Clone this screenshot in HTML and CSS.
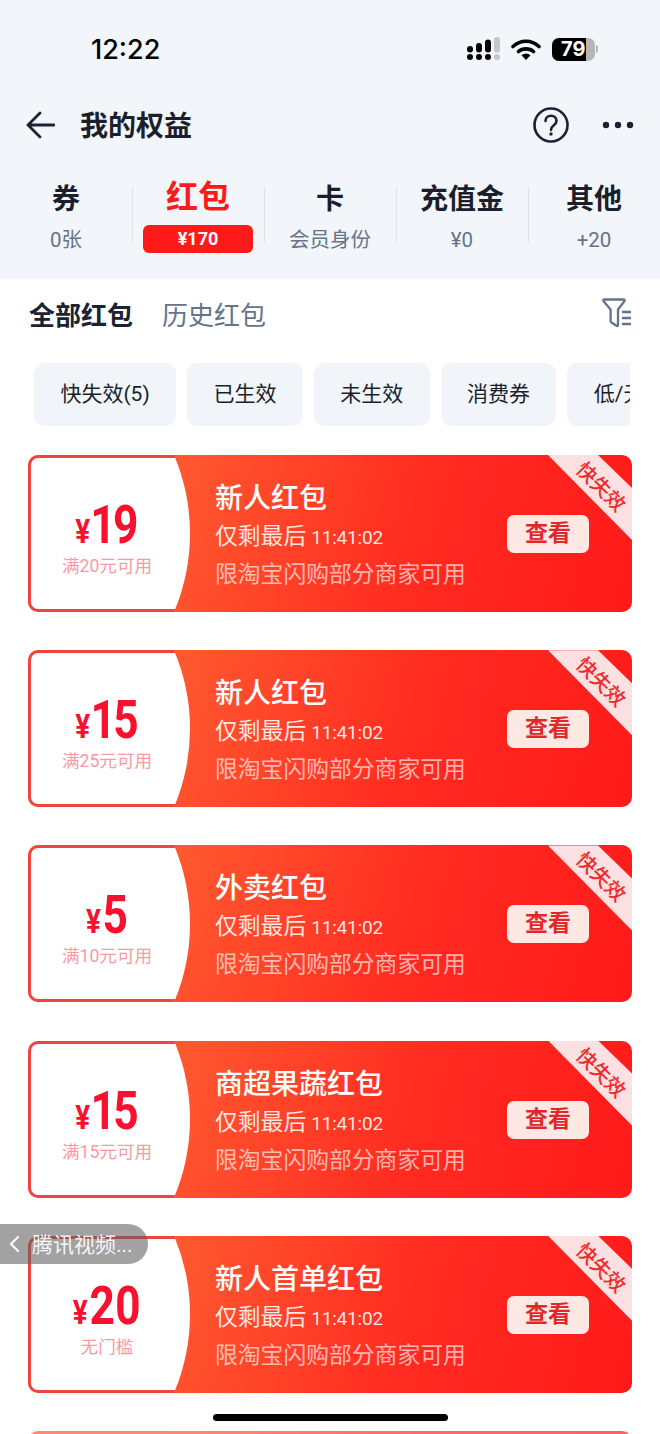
FILE: index.html
```html
<!DOCTYPE html>
<html lang="zh">

<head>
    <meta charset="UTF-8">
    <meta name="viewport" content="width=device-width, initial-scale=1.0">
    <title>我的权益</title>
    <link rel="stylesheet" href="styles.css">
</head>

<body>
    <div class="hd">
        <div class="st">
            <span class="tm">12:22</span>
            <div class="st-ic">
                <svg width="34" height="24" viewBox="0 0 34 24">
                    <g fill="#000">
                        <circle cx="3" cy="20" r="3"/><circle cx="12" cy="20" r="3"/><circle cx="21" cy="20" r="3"/>
                        <rect x="0" y="9" width="6" height="6.5" rx="3"/>
                        <rect x="9" y="6" width="6" height="9.5" rx="3"/>
                        <rect x="18" y="2.5" width="6" height="13" rx="3"/>
                    </g>
                    <g fill="#c4c7ca">
                        <circle cx="30" cy="20" r="3"/>
                        <rect x="27" y="0" width="6" height="15.5" rx="2.5"/>
                    </g>
                </svg>
                <svg class="wf" width="30" height="23" viewBox="0 0 30 23">
                    <path d="M2 8.500C9.500 1.500 20.500 1.500 28 8.500" fill="none" stroke="#000" stroke-width="3.600" stroke-linecap="round"/>
                    <path d="M7.500 13.500C11.500 10 18.500 10 22.500 13.500" fill="none" stroke="#000" stroke-width="3.600" stroke-linecap="round"/>
                    <path d="M10.500 17.200Q15 13.800 19.500 17.200L15 22Z" fill="#000"/>
                </svg>
                <div class="bt">
                    <div class="bt-b"><span class="bt-f"></span><span class="bt-t">79</span></div>
                    <span class="bt-n"></span>
                </div>
            </div>
        </div>
        <div class="nv">
            <svg class="bk" width="30" height="30" viewBox="0 0 30 30">
                <path d="M15 3 3 15l12 12M3 15h26" fill="none" stroke="#1a2233" stroke-width="2.800" stroke-linecap="round" stroke-linejoin="round"/>
            </svg>
            <span class="nv-t">我的权益</span>
            <svg class="hp" width="38" height="38" viewBox="0 0 38 38">
                <circle cx="19" cy="19" r="16.500" fill="none" stroke="#1a2233" stroke-width="2.600"/>
                <path d="M13.500 15c0-7 11-7 11 0 0 4.500-5.500 4-5.500 9" fill="none" stroke="#1a2233" stroke-width="2.600" stroke-linecap="round"/>
                <circle cx="19" cy="28" r="1.700" fill="#1a2233"/>
            </svg>
            <svg class="mr" width="32" height="8" viewBox="0 0 32 8">
                <circle cx="4" cy="4" r="3.200" fill="#1a2233"/><circle cx="16" cy="4" r="3.200" fill="#1a2233"/><circle cx="28" cy="4" r="3.200" fill="#1a2233"/>
            </svg>
        </div>
        <div class="tb">
            <div class="ti"><div class="ti-n">券</div><div class="ti-s">0张</div></div>
            <div class="ti on"><div class="ti-n">红包</div><div class="ti-s">¥170</div></div>
            <div class="ti"><div class="ti-n">卡</div><div class="ti-s">会员身份</div></div>
            <div class="ti"><div class="ti-n">充值金</div><div class="ti-s">¥0</div></div>
            <div class="ti"><div class="ti-n">其他</div><div class="ti-s">+20</div></div>
        </div>
    </div>

    <div class="sc">
        <span class="sc-a">全部红包</span>
        <span class="sc-b">历史红包</span>
        <svg class="fl" width="30" height="30" viewBox="0 0 30 30">
            <path d="M2.500 1.500h19c1.200 0 1.500 1 .9 1.700L16 11.500V27c0 1-.8 1.200-1.500.8l-5-3.300c-.6-.4-.9-.8-.9-1.500V11.500L1.600 3.200C1 2.500 1.300 1.500 2.500 1.500Z" fill="none" stroke="#64748b" stroke-width="2.300" stroke-linejoin="round"/>
            <path d="M20 14h9M20 20h9M20 26h9" stroke="#64748b" stroke-width="2.300"/>
        </svg>
    </div>

    <div class="cp">
        <div class="ch">快失效(5)</div>
        <div class="ch">已生效</div>
        <div class="ch">未生效</div>
        <div class="ch">消费券</div>
        <div class="ch">低/无门槛</div>
    </div>

    <div class="ls">
        <div class="cd">
            <div class="cd-l">
                <div class="pr"><span class="pr-y">¥</span>19</div>
                <div class="cd-c">满20元可用</div>
            </div>
            <div class="cd-m">
                <div class="cd-t">新人红包</div>
                <div class="cd-d">仅剩最后<span class="cd-tm">11:41:02</span></div>
                <div class="cd-r">限淘宝闪购部分商家可用</div>
            </div>
            <div class="cd-b">查看</div>
            <div class="rb"></div>
            <div class="rb-t">快失效</div>
        </div>
        <div class="cd">
            <div class="cd-l">
                <div class="pr"><span class="pr-y">¥</span>15</div>
                <div class="cd-c">满25元可用</div>
            </div>
            <div class="cd-m">
                <div class="cd-t">新人红包</div>
                <div class="cd-d">仅剩最后<span class="cd-tm">11:41:02</span></div>
                <div class="cd-r">限淘宝闪购部分商家可用</div>
            </div>
            <div class="cd-b">查看</div>
            <div class="rb"></div>
            <div class="rb-t">快失效</div>
        </div>
        <div class="cd">
            <div class="cd-l">
                <div class="pr"><span class="pr-y">¥</span>5</div>
                <div class="cd-c">满10元可用</div>
            </div>
            <div class="cd-m">
                <div class="cd-t">外卖红包</div>
                <div class="cd-d">仅剩最后<span class="cd-tm">11:41:02</span></div>
                <div class="cd-r">限淘宝闪购部分商家可用</div>
            </div>
            <div class="cd-b">查看</div>
            <div class="rb"></div>
            <div class="rb-t">快失效</div>
        </div>
        <div class="cd">
            <div class="cd-l">
                <div class="pr"><span class="pr-y">¥</span>15</div>
                <div class="cd-c">满15元可用</div>
            </div>
            <div class="cd-m">
                <div class="cd-t">商超果蔬红包</div>
                <div class="cd-d">仅剩最后<span class="cd-tm">11:41:02</span></div>
                <div class="cd-r">限淘宝闪购部分商家可用</div>
            </div>
            <div class="cd-b">查看</div>
            <div class="rb"></div>
            <div class="rb-t">快失效</div>
        </div>
        <div class="cd">
            <div class="cd-l">
                <div class="pr"><span class="pr-y">¥</span>20</div>
                <div class="cd-c">无门槛</div>
            </div>
            <div class="cd-m">
                <div class="cd-t">新人首单红包</div>
                <div class="cd-d">仅剩最后<span class="cd-tm">11:41:02</span></div>
                <div class="cd-r">限淘宝闪购部分商家可用</div>
            </div>
            <div class="cd-b">查看</div>
            <div class="rb"></div>
            <div class="rb-t">快失效</div>
        </div>
        <div class="cd dim"></div>
    </div>

    <div class="bk-app">
        <svg width="12" height="18" viewBox="0 0 12 18">
            <path d="M10 2 3 9l7 7" fill="none" stroke="#fff" stroke-width="2" stroke-linecap="round" stroke-linejoin="round"/>
        </svg>
        <span>腾讯视频...</span>
    </div>
    <div class="hm"></div>
</body>

</html>
```

FILE: styles.css
```css
* {
    box-sizing: border-box;
}

html,
body {
    margin: 0;
    padding: 0;
}

body {
    position: relative;
    width: 660px;
    height: 1434px;
    overflow: hidden;
    background: #fff;
    color: #1a2233;
    font-family: Roboto, "Noto Sans CJK SC", sans-serif;
}

.hd {
    height: 279px;
    background: #f2f6fa;
}

.st {
    display: flex;
    align-items: center;
    height: 96px;
    padding-top: 2px;
    padding-left: 91px;
}

.tm {
    font-family: Inter, sans-serif;
    font-size: 27px;
    font-weight: 500;
    color: #000;
}

.st-ic {
    display: flex;
    align-items: center;
    margin-left: auto;
    margin-right: 62px;
}

.wf {
    margin-left: 10px;
}

.bt {
    display: flex;
    align-items: center;
    margin-left: 11px;
}

.bt-b {
    position: relative;
    width: 43px;
    height: 23px;
    border-radius: 7px;
    background: #b5b5b5;
    overflow: hidden;
}

.bt-f {
    display: block;
    width: 34px;
    height: 23px;
    background: #000;
}

.bt-t {
    position: absolute;
    top: 0;
    left: 9px;
    line-height: 23px;
    font-family: Inter, sans-serif;
    font-size: 20px;
    font-weight: 700;
    color: #fff;
}

.bt-n {
    width: 2px;
    height: 8px;
    margin-left: 1px;
    border-radius: 0 2px 2px 0;
    background: #b5b5b5;
}

.nv {
    display: flex;
    align-items: center;
    height: 56px;
    padding-left: 25px;
}

.nv svg {
    margin-top: 2px;
}

.nv-t {
    margin-left: 25px;
    font-size: 28px;
    font-weight: 700;
    color: #1a1f2b;
}

.hp {
    margin-left: auto;
    margin-right: -1px;
}

.mr {
    margin-left: 33px;
    margin-right: 26px;
}

.tb {
    display: flex;
    padding-top: 28px;
}

.ti {
    position: relative;
    flex: 1;
    text-align: center;
}

.ti + .ti::before {
    content: "";
    position: absolute;
    top: 7px;
    bottom: 12px;
    left: 0;
    width: 1px;
    background: #dfe3e9;
}

.ti-n {
    height: 40px;
    line-height: 40px;
    font-size: 28px;
    font-weight: 700;
    color: #1a1f2b;
}

.ti-s {
    display: block;
    height: 28px;
    margin-top: 6px;
    line-height: 28px;
    font-size: 20.500px;
    color: #667389;
}

.on .ti-n {
    margin-top: -3px;
    font-size: 32px;
    color: #ff1a1a;
}

.on .ti-s {
    width: 110px;
    margin-top: 8px;
    margin-left: 11px;
    border-radius: 6px;
    background: #ff1a1a;
    font-size: 18px;
    font-weight: 700;
    color: #fff;
}

.sc {
    display: flex;
    align-items: center;
    height: 40px;
    margin-top: 14px;
    padding-left: 29px;
}

.sc-a {
    font-size: 26px;
    font-weight: 700;
    color: #1a2233;
}

.sc-b {
    margin-left: 29px;
    font-size: 26px;
    color: #64748b;
}

.fl {
    margin-left: auto;
    margin-right: 28px;
}

.cp {
    display: flex;
    gap: 11px;
    width: 596px;
    height: 63px;
    margin: 30px 0 29px 34px;
    overflow: hidden;
}

.ch {
    flex: none;
    padding: 0 26.400px;
    border-radius: 10px;
    background: #f1f5f9;
    line-height: 63px;
    font-size: 21px;
    color: #1a1f2b;
    white-space: nowrap;
}

.ls {
    display: flex;
    flex-direction: column;
    gap: 38.200px;
    height: 979px;
    padding: 0 28px;
    overflow: hidden;
}

.cd {
    position: relative;
    display: flex;
    flex: none;
    height: 157px;
    border-radius: 10px;
    background: linear-gradient(105deg, #ff5a30 22%, #ff2a20 65%, #ff1a1a 100%);
    overflow: hidden;
}

.dim {
    opacity: 0.7;
}

.cd-l {
    flex: none;
    width: 162px;
    padding-right: 7px;
    border: 3px solid #f0443e;
    border-right: 0;
    border-radius: 10px 0 0 10px;
    background: #fff;
    text-align: center;
    clip-path: circle(200.600px at -38.600px 78.500px);
}

.pr {
    height: 56px;
    margin-top: 39px;
    line-height: 56px;
    font-size: 54px;
    font-weight: 700;
    font-variant-numeric: proportional-nums;
    color: #f8102e;
    transform: scaleX(0.82);
}

.pr-y {
    margin-right: 2px;
    font-size: 34px;
}

.cd-c {
    margin-top: 1px;
    line-height: 24px;
    font-size: 17.600px;
    color: #f99aa2;
}

.cd-m {
    padding: 25px 0 0 25px;
    color: #fff;
}

.cd-t {
    line-height: 38px;
    font-size: 28px;
    font-weight: 500;
}

.cd-d {
    line-height: 38px;
    font-size: 22.800px;
    color: rgba(255, 255, 255, 0.88);
}

.cd-tm {
    margin-left: 5px;
    font-size: 19px;
    letter-spacing: -0.2px;
}

.cd-r {
    margin-top: -1px;
    line-height: 38px;
    font-size: 22.800px;
    color: rgba(255, 255, 255, 0.65);
}

.cd-b {
    position: absolute;
    top: 60px;
    right: 43px;
    width: 82px;
    height: 38px;
    border-radius: 7px;
    background: #fde8e4;
    line-height: 38px;
    text-align: center;
    font-size: 23px;
    font-weight: 700;
    color: #e0282a;
}

.rb {
    position: absolute;
    top: 0;
    right: 0;
    width: 84px;
    height: 85px;
    background: #fde0e2;
    clip-path: polygon(0 0, 50px 0, 100% 33px, 100% 100%);
}

.rb-t {
    position: absolute;
    top: 17px;
    right: -3px;
    width: 68px;
    line-height: 30px;
    text-align: center;
    font-size: 20px;
    font-weight: 500;
    color: #f02a2a;
    transform: rotate(45deg);
}

.bk-app {
    position: absolute;
    top: 1224px;
    left: 0;
    display: flex;
    align-items: center;
    gap: 12px;
    width: 148px;
    height: 40px;
    padding: 0 0 3px 8px;
    border-radius: 0 20px 20px 0;
    background: rgba(95, 95, 95, 0.58);
    font-size: 21px;
    color: rgba(255, 255, 255, 0.92);
    white-space: nowrap;
}

.bk-app svg {
    margin-top: 3px;
}

.hm {
    position: absolute;
    top: 1414px;
    left: 213px;
    width: 235px;
    height: 7px;
    border-radius: 4px;
    background: #000;
}
```
